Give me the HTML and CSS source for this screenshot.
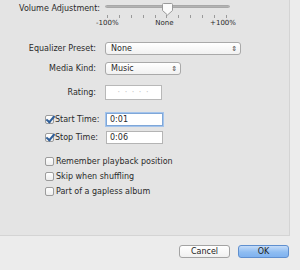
FILE: index.html
```html
<!DOCTYPE html>
<html lang="en">
<head>
    <meta charset="UTF-8">
    <title>Options</title>
    <link rel="stylesheet" href="styles.css">
</head>
<body>
    <div class="panel">
        <div class="row volume">
            <div class="label">Volume Adjustment:</div>
            <div class="slider">
                <div class="track"></div>
                <svg class="thumb" width="13" height="13" viewBox="0 0 13 13">
                    <path d="M1.5 1.5 Q1.5 0.5 2.5 0.5 H10.5 Q11.5 0.5 11.5 1.5 V7.5 L6.5 12 L1.5 7.5 Z" fill="#fbfbfb" stroke="#9a9a9a"/>
                </svg>
                <div class="ticks">
                    <span></span><span></span><span></span><span></span><span></span><span></span>
                    <span></span><span></span><span></span><span></span><span></span>
                </div>
                <div class="scale">
                    <span>-100%</span><span>None</span><span>+100%</span>
                </div>
            </div>
        </div>

        <div class="row eq">
            <div class="label">Equalizer Preset:</div>
            <div class="popup wide"><span>None</span><span class="arrows">&#8661;</span></div>
        </div>

        <div class="row kind">
            <div class="label">Media Kind:</div>
            <div class="popup narrow"><span>Music</span><span class="arrows">&#8661;</span></div>
        </div>

        <div class="row rating">
            <div class="label">Rating:</div>
            <div class="stars">&middot; &middot; &middot; &middot; &middot;</div>
        </div>

        <div class="times">
            <div class="time-row">
                <span class="check on"></span><span class="time-label">Start Time:</span>
                <div class="field focus">0:01</div>
            </div>
            <div class="time-row">
                <span class="check on"></span><span class="time-label">Stop Time:</span>
                <div class="field">0:06</div>
            </div>
        </div>

        <div class="options">
            <div class="opt"><span class="check"></span>Remember playback position</div>
            <div class="opt"><span class="check"></span>Skip when shuffling</div>
            <div class="opt"><span class="check"></span>Part of a gapless album</div>
        </div>
    </div>

    <div class="buttons">
        <button class="btn">Cancel</button>
        <button class="btn ok">OK</button>
    </div>
</body>
</html>
```

FILE: styles.css
```css
body {
    margin: 0;
    background: #ececec;
    font-family: "DejaVu Sans", sans-serif;
    font-size: 8px;
    color: #2a2a2a;
}
.panel {
    width: 290px;
    height: 236px;
    background: #e4e4e4;
    border-right: 1px solid #d4d4d4;
    border-bottom: 1px solid #d4d4d4;
    box-sizing: border-box;
}
.row {
    display: flex;
    align-items: center;
}
.label {
    width: 96px;
    text-align: right;
    margin-right: 9px;
    flex: none;
}
.volume {
    align-items: flex-start;
    padding-top: 4px;
}
.volume .label {
    width: 100px;
    margin-right: 5px;
}
.slider {
    position: relative;
    width: 125px;
    height: 26px;
}
.track {
    margin-top: 1px;
    height: 3px;
    border-radius: 2px;
    background: linear-gradient(#9d9d9d, #c9c9c9);
    border: 1px solid #a8a8a8;
    box-sizing: border-box;
}
.thumb {
    position: absolute;
    left: 56px;
    top: -1px;
}
.ticks {
    display: flex;
    justify-content: space-between;
    margin: 7px 3px 0 2px;
}
.ticks span {
    width: 1px;
    height: 3px;
    background: #9a9a9a;
}
.scale {
    display: flex;
    justify-content: space-between;
    margin: 1px -6px 0 -9px;
    font-size: 7px;
    line-height: 8px;
}
.eq {
    margin-top: 12px;
}
.popup {
    display: flex;
    justify-content: space-between;
    align-items: center;
    height: 13px;
    padding: 0 3px 0 5px;
    box-sizing: border-box;
    border: 1px solid #a9a9a9;
    border-radius: 3px;
    background: linear-gradient(#ffffff, #f1f1f1);
}
.wide {
    width: 136px;
}
.narrow {
    width: 76px;
}
.kind {
    margin-top: 7px;
}
.arrows {
    font-size: 7px;
    color: #444;
}
.rating {
    margin-top: 10px;
}
.stars {
    width: 57px;
    height: 15px;
    box-sizing: border-box;
    border: 1px solid #b8b8b8;
    background: #fff;
    color: #c4c4c4;
    text-align: center;
    line-height: 13px;
    font-size: 8px;
    letter-spacing: 1px;
}
.times {
    padding: 13px 0 0 45px;
}
.time-row {
    display: flex;
    align-items: center;
    height: 13px;
    margin-bottom: 5px;
}
.time-label {
    width: 51px;
    margin-left: 1px;
}
.check {
    display: inline-block;
    width: 9px;
    height: 9px;
    box-sizing: border-box;
    border: 1px solid #9c9c9c;
    border-radius: 2px;
    background: linear-gradient(#ffffff, #ededed);
    position: relative;
    flex: none;
}
.check.on::after {
    content: "";
    position: absolute;
    left: 2px;
    top: -2px;
    width: 3px;
    height: 7px;
    border: solid #2f5f9a;
    border-width: 0 2px 2px 0;
    transform: rotate(40deg);
}
.field {
    width: 57px;
    height: 13px;
    box-sizing: border-box;
    border: 1px solid #b4b4b4;
    background: #fff;
    line-height: 11px;
    padding-left: 3px;
}
.field.focus {
    border-color: #7fa7d8;
    box-shadow: 0 0 0 1px #a4c4ec;
}
.options {
    padding: 5px 0 0 45px;
}
.opt {
    display: flex;
    align-items: center;
    gap: 2px;
    height: 15px;
}
.buttons {
    display: flex;
    justify-content: flex-end;
    gap: 8px;
    padding: 9px 11px 0 0;
}
.btn {
    width: 51px;
    height: 13px;
    padding: 0;
    font-family: "DejaVu Sans", sans-serif;
    font-size: 8px;
    color: #222;
    border: 1px solid #a3a3a3;
    border-radius: 3px;
    background: linear-gradient(#ffffff, #f0f0f0);
}
.ok {
    border-color: #5f8fcf;
    background: linear-gradient(#c5dcf8, #8fbdf2 55%, #7fb2ef);
}
```
